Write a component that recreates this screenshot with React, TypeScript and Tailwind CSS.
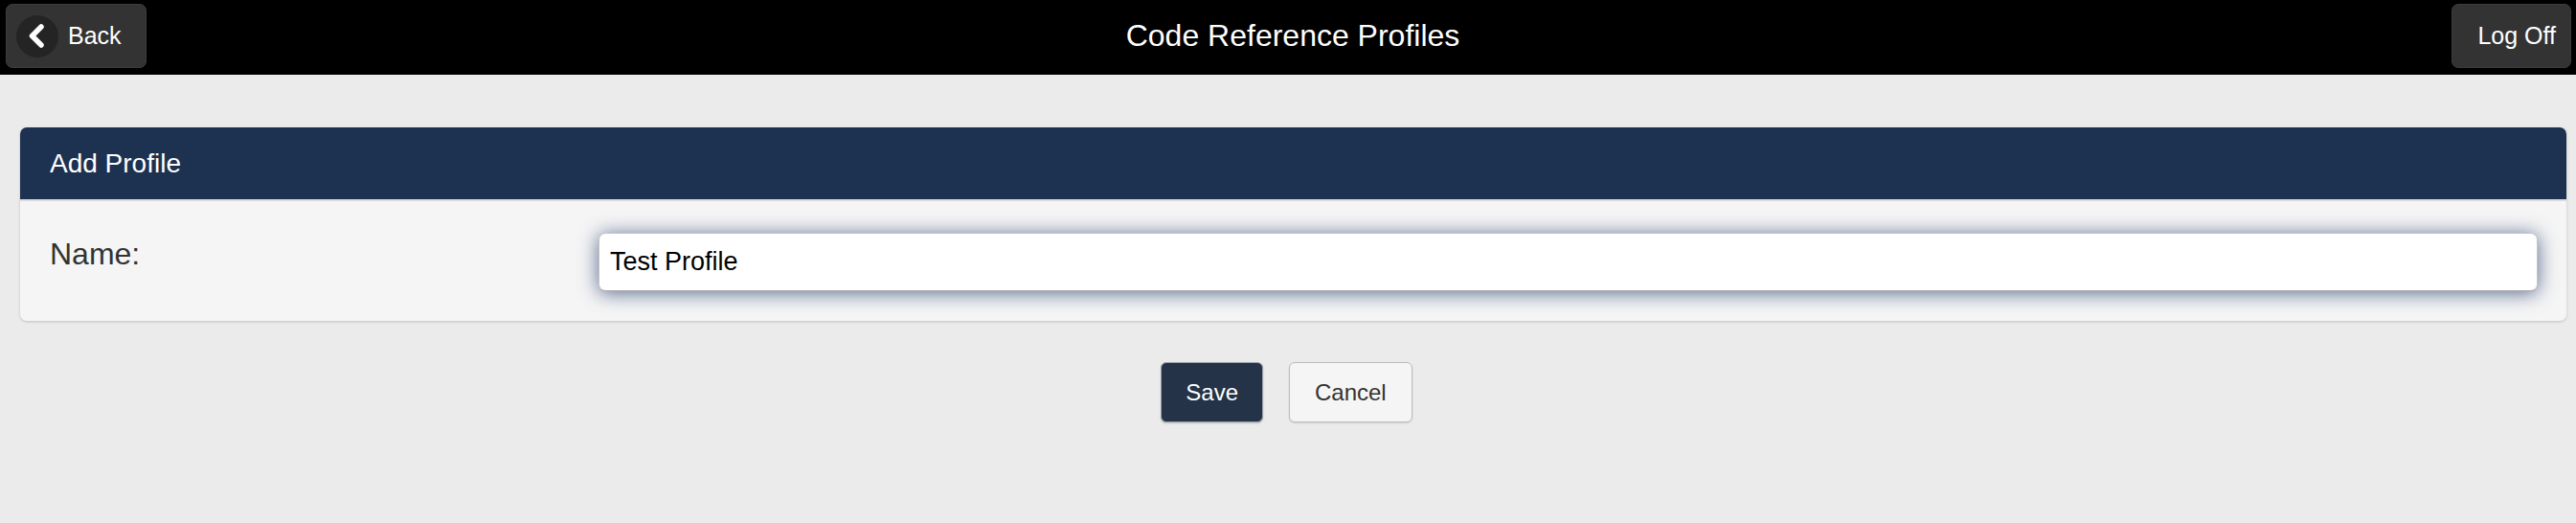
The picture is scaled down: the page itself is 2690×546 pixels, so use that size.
import { useState } from "react";

function BackIcon() {
  return (
    <span className="flex h-[44px] w-[44px] items-center justify-center rounded-full bg-[#242424]">
      <svg width="44" height="44" viewBox="0 0 44 44" fill="none">
        <path
          d="M26 12 L16.5 21.5 L26 31"
          stroke="#ffffff"
          strokeWidth="5.5"
          strokeLinecap="round"
          strokeLinejoin="round"
        />
      </svg>
    </span>
  );
}

export default function App() {
  const [name, setName] = useState("Test Profile");

  return (
    <div className="min-h-[546px] w-full bg-[#ebebeb] font-['Liberation_Sans',Arial,sans-serif]">
      {/* Top bar */}
      <header className="grid h-[78px] grid-cols-[1fr_auto_1fr] items-start bg-black px-[5px] pt-[4px]">
        <div className="flex">
          <button className="ml-[1px] flex h-[67px] items-center gap-[10px] rounded-[7px] border border-[#3c3c3c] bg-[#333333] pl-[10px] pr-[25px] text-[25px] text-white">
            <BackIcon />
            <span>Back</span>
          </button>
        </div>
        <h1 className="mt-[13px] pl-[10px] text-[32px] font-normal leading-[40px] text-white">
          Code Reference Profiles
        </h1>
        <div className="flex justify-end">
          <button className="flex h-[67px] items-center rounded-[7px] border border-[#3c3c3c] bg-[#333333] pl-[26px] pr-[15px] text-[25px] text-white">
            Log Off
          </button>
        </div>
      </header>

      {/* Panel */}
      <section className="ml-[21px] mr-[10px] mt-[55px] overflow-hidden rounded-[7px] bg-[#f5f5f5] shadow-[0_1px_3px_rgba(0,0,0,0.18)]">
        <div className="flex h-[75px] items-center bg-[#1d3150] pl-[31px] text-[28px] text-white">
          Add Profile
        </div>
        <div className="flex border-t-2 border-[#dcdcdc] pb-[31px] pl-[31px] pr-[30px] pt-[33px]">
          <label className="w-[573px] pt-[4px] text-[32px] leading-[36px] text-[#333333]">
            Name:
          </label>
          <input
            value={name}
            onChange={(e) => setName(e.target.value)}
            className="h-[61px] flex-1 rounded-[7px] border border-[#c4c4c4] border-b-[#a9a9a9] bg-white px-[11px] text-[27px] text-black shadow-[0_2px_20px_rgba(35,60,110,0.75)] outline-none"
          />
        </div>
      </section>

      {/* Actions */}
      <div className="mt-[43px] flex justify-center gap-[27px] pr-[3px]">
        <button className="h-[63px] rounded-[6px] border border-[#9da3ab] bg-[#243347] px-[25px] text-[24px] text-white shadow-[0_1px_2px_rgba(0,0,0,0.2)]">
          Save
        </button>
        <button className="h-[63px] rounded-[6px] border border-[#bdbdbd] bg-[#f5f5f5] px-[26px] text-[24px] text-[#333333] shadow-[0_1px_2px_rgba(0,0,0,0.12)]">
          Cancel
        </button>
      </div>
    </div>
  );
}
